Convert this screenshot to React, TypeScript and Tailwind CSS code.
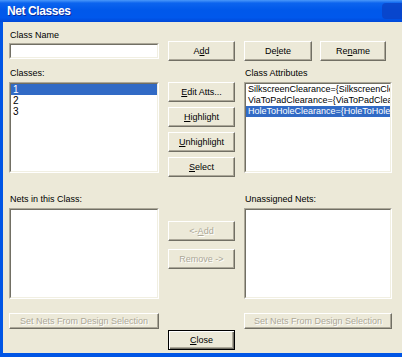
import { ReactNode } from "react";

function Sunken({ className = "", children }: { className?: string; children?: ReactNode }) {
  return (
    <div className={`border border-t-[#aca899] border-l-[#aca899] border-b-white border-r-white ${className}`}>
      <div className="h-full w-full overflow-hidden border border-t-[#716f64] border-l-[#716f64] border-b-[#f1efe2] border-r-[#f1efe2] bg-white">
        {children}
      </div>
    </div>
  );
}

function Btn({
  children,
  disabled = false,
  isDefault = false,
  className = "",
}: {
  children: ReactNode;
  disabled?: boolean;
  isDefault?: boolean;
  className?: string;
}) {
  const edge = isDefault
    ? "border border-black shadow-[inset_1px_1px_0_#fff,inset_-1px_-1px_0_#716f64,inset_-2px_-2px_0_#aca899]"
    : "border border-t-white border-l-white border-b-[#716f64] border-r-[#716f64] shadow-[inset_-1px_-1px_0_#aca899]";
  const text = disabled ? "text-[#aca899] [text-shadow:1px_1px_0_#fff]" : "text-black";
  return (
    <button
      type="button"
      className={`flex items-center justify-center bg-[#ece9d8] text-[9px] leading-none whitespace-nowrap ${edge} ${text} ${className}`}
    >
      {children}
    </button>
  );
}

function Row({ text, selected = false, big = false }: { text: string; selected?: boolean; big?: boolean }) {
  return (
    <div
      className={`h-[11px] px-[2px] leading-[11px] whitespace-nowrap ${big ? "text-[10px]" : "text-[9px]"} ${
        selected ? "bg-[#316ac5] text-white" : "text-black"
      }`}
    >
      {text}
    </div>
  );
}

function Label({ children, className = "" }: { children: ReactNode; className?: string }) {
  return <div className={`h-[11px] pl-px text-[9px] leading-[11px] text-black whitespace-nowrap ${className}`}>{children}</div>;
}

export default function App() {
  return (
    <div className="flex h-[357px] w-[402px] flex-col overflow-hidden bg-[#0055e5] font-['Liberation_Sans',Arial,sans-serif]">
      {/* Title bar */}
      <div className="relative flex h-[22px] shrink-0 items-center bg-[linear-gradient(to_bottom,#4a98fa_0%,#0c64ee_14%,#0058ea_45%,#0058ec_80%,#0048d8_100%)] pl-[7px]">
        <span className="text-[12px] font-bold tracking-[-0.4px] text-white [text-shadow:1px_1px_0_#0a2a9a]">
          Net Classes
        </span>
        <div className="absolute right-[-6px] top-[3px] h-[16px] w-[26px] rounded-l-[4px] bg-[#0c3fc0] opacity-70" />
      </div>

      {/* Frame + client */}
      <div className="flex flex-1 pb-[4px] pl-[3px]">
        <div className="flex flex-1 gap-[9px] bg-[#ece9d8] pl-[6px]">
          {/* Left column */}
          <div className="flex w-[150px] flex-col">
            <Label className="mt-[8px]">Class Name</Label>
            <Sunken className="mt-[2px] h-[16px]" />
            <Label className="mt-[9px]">Classes:</Label>
            <Sunken className="mt-[3px] h-[91px]">
              <Row text="1" selected big />
              <Row text="2" big />
              <Row text="3" big />
            </Sunken>
            <Label className="mt-[21px]">Nets in this Class:</Label>
            <Sunken className="mt-[3px] h-[91px]" />
            <Btn disabled className="mt-[14px] h-[16px] w-full">
              Set Nets From Design Selection
            </Btn>
          </div>

          {/* Middle column */}
          <div className="flex w-[67px] flex-col">
            <Btn className="mt-[19px] h-[20px]">
              A<u>d</u>d
            </Btn>
            <div className="mt-[21px] flex flex-col gap-[5px]">
              <Btn className="h-[20px]">
                <u>E</u>dit Atts...
              </Btn>
              <Btn className="h-[20px]">
                <u>H</u>ighlight
              </Btn>
              <Btn className="h-[20px]">
                <u>U</u>nhighlight
              </Btn>
              <Btn className="h-[20px]">
                <u>S</u>elect
              </Btn>
            </div>
            <Btn disabled className="mt-[44px] h-[20px]">
              {"<- "}
              <u>A</u>dd
            </Btn>
            <Btn disabled className="mt-[8px] h-[20px]">
              Remove -&gt;
            </Btn>
            <Btn isDefault className="mt-[61px] h-[20px]">
              <u>C</u>lose
            </Btn>
          </div>

          {/* Right column */}
          <div className="flex w-[148px] flex-col">
            <div className="mt-[19px] flex gap-[8px]">
              <Btn className="h-[20px] w-[68px]">
                De<u>l</u>ete
              </Btn>
              <Btn className="h-[20px] w-[66px]">
                Re<u>n</u>ame
              </Btn>
            </div>
            <Label className="mt-[7px]">Class Attributes</Label>
            <Sunken className="mt-[3px] h-[91px]">
              <Row text="SilkscreenClearance={SilkscreenClearance}" />
              <Row text="ViaToPadClearance={ViaToPadClearance}" />
              <Row text="HoleToHoleClearance={HoleToHoleClearance}" selected />
            </Sunken>
            <Label className="mt-[21px]">Unassigned Nets:</Label>
            <Sunken className="mt-[3px] h-[91px]" />
            <Btn disabled className="mt-[14px] h-[16px] w-full">
              Set Nets From Design Selection
            </Btn>
          </div>
        </div>
      </div>
    </div>
  );
}
